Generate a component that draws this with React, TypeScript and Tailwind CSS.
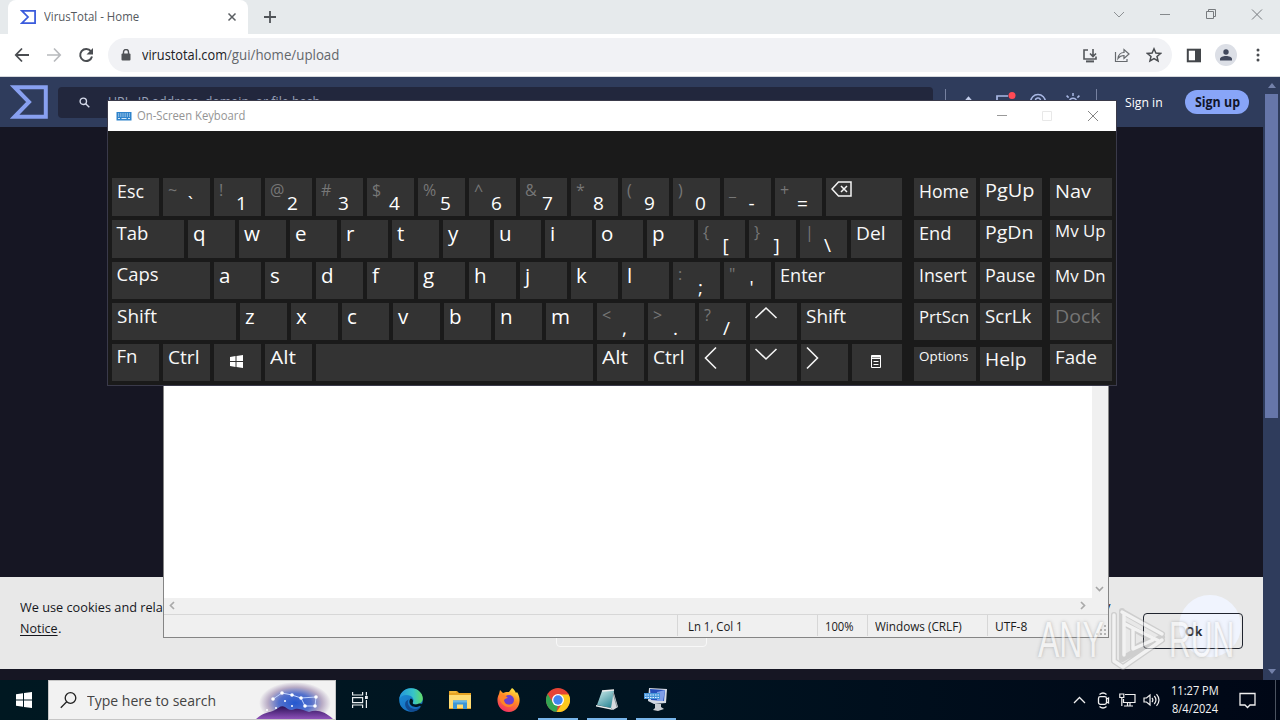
import { useLayoutEffect, useRef, useState } from "react";
import type { ReactNode } from "react";

/* Text squeezed or stretched horizontally so that it fills exactly w pixels. */
function Fit({ w, className = "", inner = "", children }: { w: number; className?: string; inner?: string; children: ReactNode }) {
  const ref = useRef<HTMLSpanElement>(null);
  const [scale, setScale] = useState(1);
  useLayoutEffect(() => {
    if (ref.current) setScale(w / ref.current.offsetWidth);
  }, [w]);
  return (
    <span className={`inline-block whitespace-nowrap ${className}`} style={{ width: w }}>
      <span ref={ref} className={`inline-block origin-left whitespace-nowrap ${inner}`} style={{ transform: `scaleX(${scale})` }}>
        {children}
      </span>
    </span>
  );
}

function Sigma({ className, color, sw }: { className: string; color: string; sw: number }) {
  return (
    <svg className={className} viewBox="0 0 38 34" fill="none" stroke={color} strokeWidth={sw} preserveAspectRatio="none">
      <path d="M4.5 2.2H35.8V31.8H4.5L19 17Z" />
    </svg>
  );
}

/* ---------- Browser ---------- */

function TabStrip() {
  return (
    <div className="flex h-[34px] shrink-0 bg-[#e6eaec]">
      <div className="ml-2 flex h-[34px] w-[240px] items-center rounded-t-lg bg-white pl-[12px]">
        <Sigma className="h-[14px] w-[16px]" color="#3a5bdc" sw={4.2} />
        <Fit w={95} className="ml-[8px] text-[12.5px] leading-4 text-[#55595e]">VirusTotal - Home</Fit>
        <svg className="ml-[88px] size-[10px]" viewBox="0 0 10 10" stroke="#5a5e62" strokeWidth="1.5">
          <path d="M1.5 1.5l7 7M8.5 1.5l-7 7" />
        </svg>
      </div>
      <svg className="ml-[15px] mt-[10px] size-[14px]" viewBox="0 0 14 14" stroke="#505458" strokeWidth="1.8">
        <path d="M7 1v12M1 7h12" />
      </svg>
      <div className="ml-auto flex h-[29px] items-center pr-[17px]">
        <svg className="h-3 w-[12px]" viewBox="0 0 12 12" fill="none" stroke="#8d9194">
          <path d="M1 3l5 5 5-5" />
        </svg>
        <svg className="ml-[34px] h-3 w-[12px]" viewBox="0 0 12 12" stroke="#85898c">
          <path d="M1 5.5h10" />
        </svg>
        <svg className="ml-[34px] h-3 w-[12px]" viewBox="0 0 12 12" fill="none" stroke="#777b7e">
          <path d="M1.5 2.5h7v7h-7zM3.5 2.500v-2h7v7h-2" />
        </svg>
        <svg className="ml-[34px] h-3 w-[12px]" viewBox="0 0 12 12" stroke="#777b7e">
          <path d="M1 .5l10 10M11 .5L1 10.500" />
        </svg>
      </div>
    </div>
  );
}

function Toolbar() {
  return (
    <div className="flex h-[43px] shrink-0 items-center border-b border-[#d5d8dc] bg-white">
      <svg className="ml-[14px] size-4" viewBox="0 0 16 16" fill="none" stroke="#4a4d51" strokeWidth="1.8">
        <path d="M15 8H2M8 1.5L1.8 8 8 14.5" />
      </svg>
      <svg className="ml-4 size-4" viewBox="0 0 16 16" fill="none" stroke="#b8babd" strokeWidth="1.7">
        <path d="M1 8h13M8 1.5L14.2 8 8 14.5" />
      </svg>
      <svg className="ml-4 size-4" viewBox="0 0 16 16" fill="none" stroke="#4a4d51" strokeWidth="2">
        <path d="M13 4.4A6 6 0 1 0 14 9.5" />
        <path d="M15 1v6.5H8.5z" fill="#4a4d51" stroke="none" />
      </svg>
      <div className="ml-[14px] flex h-[34px] w-[1064px] items-center rounded-full bg-[#f1f2f5]">
        <svg className="ml-[13px] h-[12px] w-[10px]" viewBox="0 0 10 12">
          <rect x="0.5" y="4.5" width="9" height="7" rx="1" fill="#505357" />
          <path d="M2.5 5V3a2.5 2.5 0 0 1 5 0v2" fill="none" stroke="#505357" strokeWidth="1.4" />
        </svg>
        <div className="ml-[11px] flex text-[14px] leading-5">
          <Fit w={85} className="text-[#202124]">virustotal.com</Fit>
          <Fit w={112} className="text-[#63676b]">/gui/home/upload</Fit>
        </div>
        <svg className="ml-auto h-[15px] w-[16px]" viewBox="0 0 16 15" fill="none" stroke="#55585c" strokeWidth="1.6">
          <path d="M6 2H2v9h12V8.5M11 1v7M8 5.5l3 3 3-3" />
          <path d="M4 13.4h8" strokeWidth="2" />
        </svg>
        <svg className="ml-4 size-[16px]" viewBox="0 0 16 16" fill="none" stroke="#66696d" strokeWidth="1.2">
          <path d="M1.500 5v9.500h11.500V12M4 11.500c.5-4 3-6 6-6V2.500L15 7l-5 4.500V8.500C7.500 8.500 5.500 9.500 4 11.500z" />
        </svg>
        <svg className="ml-4 mr-[10px] size-[16px]" viewBox="0 0 16 16" fill="none" stroke="#4a4d51" strokeWidth="1.5">
          <path d="M8 1.800l1.900 4.200 4.600.45-3.500 3 1.050 4.500L8 11.600l-4.050 2.350L5 9.450l-3.500-3L6.100 6z" />
        </svg>
      </div>
      <svg className="ml-[14px] size-[15px]" viewBox="0 0 15 15">
        <rect x="1.800" y="1.700" width="12.200" height="11.600" fill="none" stroke="#43464a" strokeWidth="2" />
        <rect x="9" y="1.500" width="5" height="12" fill="#43464a" />
      </svg>
      <div className="ml-[14px] flex size-[22px] items-center justify-center rounded-full bg-[#dcdfe6]">
        <svg className="size-3" viewBox="0 0 12 12" fill="#41485c">
          <circle cx="6" cy="3" r="2.700" />
          <path d="M0 11.500V10C0 8 3 7 6 7s6 1 6 3v1.500z" />
        </svg>
      </div>
      <svg className="ml-[19px] h-[14px] w-[4px]" viewBox="0 0 4 14" fill="#4a4d51">
        <circle cx="2" cy="2" r="1.500" />
        <circle cx="2" cy="7" r="1.500" />
        <circle cx="2" cy="12" r="1.500" />
      </svg>
    </div>
  );
}

function SiteHeader() {
  return (
    <div className="flex h-[50px] shrink-0 items-center bg-[#2f3c5c]">
      <Sigma className="ml-[10px] h-[34px] w-[38px]" color="#88a0f0" sw={4} />
      <div className="ml-[10px] flex h-[31px] w-[875px] items-center rounded bg-[#22273d]">
        <svg className="ml-[21px] mt-px size-[11px]" viewBox="0 0 11 11" fill="none" stroke="#d5daea" strokeWidth="1.400">
          <circle cx="4.300" cy="4.300" r="3.200" />
          <path d="M6.700 6.700L10.300 10.300" />
        </svg>
        <Fit w={212} className="ml-[18px] text-[14px] leading-5 text-[#98a0b8]">URL, IP address, domain, or file hash</Fit>
      </div>
      <div className="ml-[12px] h-[27px] w-px bg-[#7681a0]" />
      <svg className="ml-[15px] size-[15px]" viewBox="0 0 15 15" fill="none" stroke="#c5cfec" strokeWidth="1.600">
        <path d="M7.500 12V3M4 6.500L7.500 2.500 11 6.500M1.500 13.500h12" />
      </svg>
      <svg className="ml-[19px] h-[20px] w-[22px]" viewBox="0 0 22 20" fill="none">
        <path d="M13 4H2v13l3-3h12V8" stroke="#a9b8e4" strokeWidth="1.700" />
        <circle cx="17" cy="3.500" r="3.500" fill="#ff4a55" />
      </svg>
      <svg className="ml-[12px] size-[18px]" viewBox="0 0 18 18" fill="none" stroke="#a9b8e4" strokeWidth="1.500">
        <circle cx="9" cy="9" r="7.500" />
        <path d="M6.500 7.500a2.500 2.500 0 1 1 3.500 2.200c-1 .5-1 1-1 1.800M9 12.500V14" />
      </svg>
      <svg className="ml-[17px] size-[18px]" viewBox="0 0 18 18" fill="none" stroke="#a9b8e4" strokeWidth="1.500">
        <circle cx="9" cy="9" r="3.800" />
        <path d="M9 0v3M9 15v3M0 9h3M15 9h3M2.600 2.600l2 2M13.400 13.400l2 2M2.600 15.400l2-2M13.400 4.600l2-2" />
      </svg>
      <div className="ml-[14px] h-[27px] w-px bg-[#7681a0]" />
      <Fit w={38} className="ml-[28px] text-[13.500px] leading-5 text-white">Sign in</Fit>
      <div className="ml-[22px] flex h-6 w-16 items-center justify-center rounded-full bg-[#88a5f8]">
        <Fit w={45} className="text-[13.500px] font-bold leading-5 text-[#11162b]">Sign up</Fit>
      </div>
    </div>
  );
}

function CookieBanner() {
  return (
    <div className="relative mt-auto flex h-[92px] shrink-0 justify-between bg-[#e8e8e8]">
      <div className="pl-5 pt-[20px] text-[13.500px] leading-[21px] text-[#16171d]">
        <div><Fit w={147}>We use cookies and relat</Fit></div>
        <Fit w={38} inner="underline underline-offset-2">Notice</Fit>.
      </div>
      <div className="absolute left-[1179px] top-[18px] size-[62px] rounded-full bg-[#f0f4fe]" />
      <div className="absolute left-[556px] top-[40px] h-[30px] w-[151px] rounded border border-[#f8f8f8]" />
      <div className="relative mr-5 mt-9 flex h-9 w-[100px] items-center justify-center rounded border border-[#20242e]">
        <Fit w={17} className="text-[13px] font-bold leading-5 text-[#292b31]">Ok</Fit>
      </div>
      <div className="absolute left-[1104px] top-[20px] text-[13px] text-[#16171d]">y</div>
    </div>
  );
}

function Browser() {
  return (
    <div className="flex h-[680px] flex-col">
      <TabStrip />
      <Toolbar />
      <div className="flex flex-1">
        <div className="flex w-[1263px] flex-col bg-[#161623] pb-[11px]">
          <SiteHeader />
          <CookieBanner />
        </div>
        <div className="flex flex-1 flex-col items-center bg-[#2f3c5c]">
          <svg className="mt-[6px] h-[5px] w-2" viewBox="0 0 8 5" fill="#7381aa">
            <path d="M0 5L4 0l4 5z" />
          </svg>
          <div className="mt-[6px] h-[324px] w-[13px] bg-[#6676a9]" />
          <svg className="mb-[6px] mt-auto h-[5px] w-2" viewBox="0 0 8 5" fill="#7381aa">
            <path d="M0 0l4 5 4-5z" />
          </svg>
        </div>
      </div>
    </div>
  );
}

/* ---------- Text editor window ---------- */

function Notepad() {
  return (
    <div className="absolute left-[163px] top-[370px] flex h-[268px] w-[946px] flex-col border border-[#858585] bg-white">
      <div className="flex h-[227px]">
        <div className="flex-1" />
        <div className="flex w-[16px] items-end justify-center bg-[#f0f0f0] pb-[6px] pr-px">
          <svg className="h-[6px] w-[9px]" viewBox="0 0 9 6" fill="none" stroke="#a5a5a5" strokeWidth="1.600">
            <path d="M1 1l3.500 3.500L8 1" />
          </svg>
        </div>
      </div>
      <div className="flex h-[17px] items-start justify-between border-b border-[#d7d7d7] bg-[#f0f0f0] pl-[5px] pr-[22px] pt-[3px]">
        <svg className="h-[9px] w-[6px]" viewBox="0 0 6 9" fill="none" stroke="#aaaaaa" strokeWidth="1.700">
          <path d="M5 1L1.500 4.500 5 8" />
        </svg>
        <svg className="h-[9px] w-[6px]" viewBox="0 0 6 9" fill="none" stroke="#aaaaaa" strokeWidth="1.700">
          <path d="M1 1l3.500 3.500L1 8" />
        </svg>
      </div>
      <div className="flex flex-1 items-start bg-[#f0f0f0] text-[12px] leading-[23px] text-[#1a1a1a]">
        <div className="w-[513px]" />
        <div className="h-[21px] w-[140px] border-l border-[#d7d7d7] pl-[10px]"><Fit w={55}>Ln 1, Col 1</Fit></div>
        <div className="h-[21px] w-[50px] border-l border-[#d7d7d7] pl-[7px]"><Fit w={29}>100%</Fit></div>
        <div className="h-[21px] w-[120px] border-l border-[#d7d7d7] pl-[7px]"><Fit w={87}>Windows (CRLF)</Fit></div>
        <div className="h-[21px] flex-1 border-l border-[#d7d7d7] pl-[7px]"><Fit w={32}>UTF-8</Fit></div>
        <svg className="mr-[2px] mt-[10px] size-[10px]" viewBox="0 0 10 10" fill="#b5b5b5">
          <path d="M8 0h2v2H8zM8 4h2v2H8zM4 4h2v2H4zM8 8h2v2H8zM4 8h2v2H4zM0 8h2v2H0z" />
        </svg>
      </div>
    </div>
  );
}

/* ---------- On-screen keyboard ---------- */

function Label({ w, text, size = "text-[18.500px]", top = "pt-px leading-[24px]", dim = false }: { w: number; text: string; size?: string; top?: string; dim?: boolean }) {
  return (
    <div className={`pl-[4.500px] ${size} ${top} ${dim ? "text-[#757575]" : "text-[#f8f8f8]"}`}>
      <Fit w={w}>{text}</Fit>
    </div>
  );
}

function Key({ width = "w-[47px]", children }: { width?: string; children?: ReactNode }) {
  return <div className={`h-full shrink-0 bg-[#333333] ${width}`}>{children}</div>;
}

function Letter({ c }: { c: string }) {
  return (
    <Key>
      <div className="pl-[5px] pt-px text-[20.500px] leading-[25px] text-white">{c}</div>
    </Key>
  );
}

function Pair({ a, b }: { a: string; b: string }) {
  return (
    <Key>
      <div className="flex items-start">
        <div className="w-[17px] pl-[5px] pt-px text-[16px] leading-[22px] text-[#777777]">{a}</div>
        <div className="w-[21px] pt-[12px] text-center text-[19px] leading-[26px] text-white">{b}</div>
      </div>
    </Key>
  );
}

function Arrow({ d }: { d: string }) {
  return (
    <Key>
      <svg className="h-[26px] w-[30px]" viewBox="0 0 30 26" fill="none" stroke="#f5f5f5" strokeWidth="1.600">
        <path d={d} />
      </svg>
    </Key>
  );
}

const NUMBER_ROW: [string, string][] = [
  ["~", "`"], ["!", "1"], ["@", "2"], ["#", "3"], ["$", "4"], ["%", "5"], ["^", "6"],
  ["&", "7"], ["*", "8"], ["(", "9"], [")", "0"], ["_", "-"], ["+", "="],
];

function MainKeys() {
  return (
    <div className="flex w-[790px] flex-col">
      <div className="mb-1 flex h-[38px] gap-1">
        <Key><Label w={27} text="Esc" /></Key>
        {NUMBER_ROW.map(([a, b]) => <Pair key={b} a={a} b={b} />)}
        <Key width="w-[76px]">
          <svg className="ml-[5px] mt-[3px] h-[16px] w-[21px]" viewBox="0 0 21 16" fill="none" stroke="#f5f5f5" strokeWidth="1.500">
            <path d="M7.500 1H20v14H7.500L1 8zM10 5l6 6M16 5l-6 6" />
          </svg>
        </Key>
      </div>
      <div className="mb-1 flex h-[38px] gap-1">
        <Key width="w-[72px]"><Label w={32} text="Tab" /></Key>
        {[..."qwertyuiop"].map((c) => <Letter key={c} c={c} />)}
        <Pair a="{" b="[" />
        <Pair a="}" b="]" />
        <Pair a="|" b="\" />
        <Key width="w-[51px]"><Label w={29} text="Del" /></Key>
      </div>
      <div className="mb-1 flex h-[37px] gap-1">
        <Key width="w-[98px]"><Label w={42} text="Caps" top="pt-0 leading-[24px]" /></Key>
        {[..."asdfghjkl"].map((c) => <Letter key={c} c={c} />)}
        <Pair a=":" b=";" />
        <Pair a={'"'} b="'" />
        <Key width="w-[127px]"><Label w={45} text="Enter" /></Key>
      </div>
      <div className="mb-1 flex h-[37px] gap-1">
        <Key width="w-[124px]"><Label w={40} text="Shift" /></Key>
        {[..."zxcvbnm"].map((c) => <Letter key={c} c={c} />)}
        <Pair a="<" b="," />
        <Pair a=">" b="." />
        <Pair a="?" b="/" />
        <Arrow d="M5.500 15L16 5L26.500 15" />
        <Key width="w-[101px]"><Label w={40} text="Shift" /></Key>
      </div>
      <div className="flex h-[37px] gap-1">
        <Key><Label w={21} text="Fn" top="pt-0 leading-[24px]" /></Key>
        <Key><Label w={31} text="Ctrl" /></Key>
        <Key>
          <svg className="ml-4 mt-[11px] size-[13px]" viewBox="0 0 13 13" fill="white">
            <path d="M0 1.900L5.500 1.100V6H0zM6.500 1L13 0v6H6.500zM0 7h5.500v4.900L0 11.100zM6.500 7H13v6l-6.500-1z" />
          </svg>
        </Key>
        <Key><Label w={26} text="Alt" /></Key>
        <Key width="w-[277px]" />
        <Key><Label w={26} text="Alt" /></Key>
        <Key><Label w={31} text="Ctrl" /></Key>
        <Arrow d="M17 3.500L6.500 14L17 24.500" />
        <Arrow d="M5.500 5L16 15L26.500 5" />
        <Arrow d="M6 3.500L16.500 14L6 24.500" />
        <Key width="w-[50px]">
          <svg className="ml-[19px] mt-[11px] h-[13px] w-[10px]" viewBox="0 0 10 13" fill="none" stroke="#ffffff">
            <path d="M.5 .5h9v12h-9zM.5 3.500h9M2.500 6.500h5M2.500 9.500h5" />
            <path d="M.5 1.500h9" strokeWidth="2" />
          </svg>
        </Key>
      </div>
    </div>
  );
}

function SideKeys() {
  const k = "w-[62px]";
  return (
    <>
      <div className="ml-[12px] flex flex-col">
        <div className="mb-1 h-[38px]"><Key width={k}><Label w={49.5} text="Home" /></Key></div>
        <div className="mb-1 h-[38px]"><Key width={k}><Label w={32.5} text="End" /></Key></div>
        <div className="mb-1 h-[37px]"><Key width={k}><Label w={48} text="Insert" /></Key></div>
        <div className="mb-[7px] h-[37px]"><Key width={k}><Label w={50} text="PrtScn" size="text-[17px]" top="pt-px leading-[26px]" /></Key></div>
        <div className="h-[34px]"><Key width={k}><Label w={49.5} text="Options" size="text-[13px]" top="pt-0 leading-[18px]" /></Key></div>
      </div>
      <div className="ml-1 flex flex-col">
        <div className="mb-1 h-[38px]"><Key width={k}><Label w={49.5} text="PgUp" top="pt-0 leading-[24px]" /></Key></div>
        <div className="mb-1 h-[38px]"><Key width={k}><Label w={48.5} text="PgDn" top="pt-0 leading-[24px]" /></Key></div>
        <div className="mb-1 h-[37px]"><Key width={k}><Label w={50.5} text="Pause" /></Key></div>
        <div className="mb-[7px] h-[37px]"><Key width={k}><Label w={46.5} text="ScrLk" /></Key></div>
        <div className="h-[34px]"><Key width={k}><Label w={41.5} text="Help" top="pt-0 leading-[24px]" /></Key></div>
      </div>
      <div className="ml-2 flex flex-col">
        <div className="mb-1 h-[38px]"><Key width={k}><Label w={35.5} text="Nav" /></Key></div>
        <div className="mb-1 h-[38px]"><Key width={k}><Label w={50.5} text="Mv Up" size="text-[16px]" top="pt-0 leading-[22px]" /></Key></div>
        <div className="mb-1 h-[37px]"><Key width={k}><Label w={50.5} text="Mv Dn" size="text-[16px]" top="pt-[2px] leading-[24px]" /></Key></div>
        <div className="mb-1 h-[37px]"><Key width={k}><Label w={45.5} text="Dock" dim /></Key></div>
        <div className="h-[37px]"><Key width={k}><Label w={42.5} text="Fade" /></Key></div>
      </div>
    </>
  );
}

function OnScreenKeyboard() {
  return (
    <div className="absolute left-[107px] top-[100px] h-[286px] w-[1010px] border border-[#3a3a4a] bg-[#1a1a1a]">
      <div className="flex h-[30px] items-center bg-white">
        <svg className="ml-[8px] h-[9px] w-[16px]" viewBox="0 0 16 9">
          <rect x=".5" width="15" height="8.500" fill="#2f83cb" />
          <path d="M2 2h12M2 4h12" stroke="#d5e8f8" strokeDasharray="1.200 1" />
          <path d="M2 6.500h2M5.500 6.500h5M12 6.500h2" stroke="#d5e8f8" />
        </svg>
        <Fit w={108} className="ml-[5px] text-[12px] leading-4 text-[#949494]">On-Screen Keyboard</Fit>
        <svg className="ml-auto size-[12px]" viewBox="0 0 12 12" stroke="#999999"><path d="M1 5.500h10" /></svg>
        <svg className="ml-[33px] size-[12px]" viewBox="0 0 12 12" fill="none" stroke="#e8e8e8"><path d="M1.500 1.500h9v9h-9z" /></svg>
        <svg className="ml-[34px] mr-[17px] size-[12px]" viewBox="0 0 12 12" stroke="#858585"><path d="M1 1l10 10M11 1L1 11" /></svg>
      </div>
      <div className="flex pl-1 pt-[47px]">
        <MainKeys />
        <SideKeys />
      </div>
    </div>
  );
}

/* ---------- Watermark ---------- */

function Watermark() {
  return (
    <div className="absolute left-[1038px] top-[606px] flex h-[68px] w-[200px] items-center opacity-60">
      <div className="font-['Liberation_Sans'] text-[50px] leading-[60px] text-[#fafafa] [text-shadow:0_0_4px_#888]"><Fit w={66}>ANY</Fit></div>
      <svg className="ml-[2px] h-[66px] w-[60px]" viewBox="0 0 60 66" fill="none" strokeLinejoin="round" strokeLinecap="round">
        <g stroke="#a0a0a0" strokeWidth="6" opacity="0.600">
          <path d="M8 8v46l9 6L56 33M16 4v48L56 30M17 5L56 27M27 22v20l19-10M17 16l34 19" />
        </g>
        <g stroke="#fafafa" strokeWidth="3.400">
          <path d="M8 8v46l9 6L56 33M16 5L56 27M18 6v42M27 22v20l20-9M19 17l34 17" />
        </g>
      </svg>
      <div className="ml-[3px] font-['Liberation_Sans'] text-[50px] leading-[60px] text-[#fafafa] [text-shadow:0_0_4px_#999]"><Fit w={65}>RUN</Fit></div>
    </div>
  );
}

/* ---------- Taskbar ---------- */

function SearchArt() {
  return (
    <svg className="ml-auto h-[38px] w-[79px]" viewBox="0 0 79 38">
      <defs>
        <radialGradient id="sky">
          <stop offset="0" stopColor="#2458cf" />
          <stop offset="0.450" stopColor="#5270cc" />
          <stop offset="0.750" stopColor="#b8abc5" />
          <stop offset="1" stopColor="#f2f2f2" />
        </radialGradient>
        <linearGradient id="hill" x2="0" y2="1">
          <stop stopColor="#2d1258" />
          <stop offset="1" stopColor="#8e52ba" />
        </linearGradient>
      </defs>
      <ellipse cx="39" cy="22" rx="36" ry="21" fill="url(#sky)" />
      <path d="M0 38C8 31 13 32 19 29c4-2 6-5 10-3 4 3 6 4 10 2 6-1 9 2 14 3 7-3 16-1 24 7z" fill="url(#hill)" />
      <path d="M17 18l9-6 10 2 9 3 15-1-1 9H49l-4-8" fill="none" stroke="#bfd4ff" strokeWidth="1" />
      <g fill="white">
        <circle cx="17" cy="18" r="1.800" /><circle cx="26" cy="12" r="1.800" /><circle cx="36" cy="14" r="1.800" />
        <circle cx="45" cy="17" r="1.800" /><circle cx="60" cy="16" r="1.800" /><circle cx="59" cy="25" r="1.800" />
        <circle cx="49" cy="25" r="1.800" /><circle cx="29" cy="20" r="1" /><circle cx="36" cy="25" r="1" />
        <circle cx="20" cy="27" r="1" /><circle cx="11" cy="29" r="1" />
      </g>
    </svg>
  );
}

function TaskSlot({ active = false, children }: { active?: boolean; children: ReactNode }) {
  return (
    <div className="flex w-[49px] flex-col items-center justify-between">
      <div className="flex h-[38px] items-center pt-[2px]">{children}</div>
      <div className={`h-[2px] w-[40px] ${active ? "bg-[#78b5ea]" : ""}`} />
    </div>
  );
}

function Taskbar() {
  return (
    <div className="flex h-10 bg-gradient-to-r from-[#001821] via-[#001421] to-[#000716]">
      <div className="flex w-12 items-center justify-center">
        <svg className="size-4" viewBox="0 0 16 16" fill="white">
          <path d="M0 2.200L7 1.200V7.500H0zM8 1L16 0v7.500H8zM0 8.500h7v6.300L0 13.800zM8 8.500h8V16l-8-1z" />
        </svg>
      </div>
      <div className="flex w-[288px] items-center border border-[#c6c6c6] bg-[#f2f2f2]">
        <svg className="ml-[11px] size-[18px]" viewBox="0 0 18 18" fill="none" stroke="#222222" strokeWidth="1.300">
          <circle cx="10.500" cy="7" r="5.300" />
          <path d="M6.700 10.800L.8 16.700" />
        </svg>
        <Fit w={129} className="ml-[9px] text-[15px] leading-5 text-[#444444]">Type here to search</Fit>
        <SearchArt />
      </div>
      <div className="flex w-[50px] items-center pl-4">
        <svg className="size-4" viewBox="0 0 16 16" fill="none" stroke="#e8edf0" strokeWidth="1.200">
          <path d="M.6 0v3h10V0M.6 5.600h10v5H.6zM.6 16v-3h10v3M14.400 0v3.500M14.400 8v8" />
          <path d="M13 4h2.800v3H13z" fill="#e8edf0" stroke="none" />
        </svg>
      </div>
      <TaskSlot>
        <svg className="size-6" viewBox="0 0 24 24">
          <defs>
            <linearGradient id="edgeTop" x1="0" x2="1"><stop stopColor="#2394dc" /><stop offset="0.600" stopColor="#37c4c8" /><stop offset="1" stopColor="#62dc65" /></linearGradient>
            <linearGradient id="edgeLow" x2="0.700" y2="1"><stop stopColor="#1b91d8" /><stop offset="1" stopColor="#1569bb" /></linearGradient>
          </defs>
          <circle cx="12" cy="12" r="11.800" fill="url(#edgeLow)" />
          <path d="M.3 11C1.200 4.500 6 .2 12 .2c7 0 11.800 5 11.800 10 0 4-3.400 6.300-6.700 6.300-2.500 0-3.900-1-3.400-1.700 1.600-1.700 1-5-2-6.700C7.800 6 2.500 6.500.3 11z" fill="url(#edgeTop)" />
          <path d="M9.800 11.500c-2.500 3 0 9 5.200 9.500 2.500.2 5-.7 6.700-2-3.500 6-12.200 6.300-15 0-1.500-3.800 0-6.700 3.100-7.500z" fill="#114b91" />
          <path d="M11.800 10.600c-2 1.800-1.700 5.200.5 7 2.800 2.200 6.500 1.600 8.700.1l1 1.200 2-3-4-.5c-3 1.600-6.700 1.200-6.300-.6.700-1.300.5-3.700-1.900-4.200z" fill="#001721" />
        </svg>
      </TaskSlot>
      <TaskSlot>
        <svg className="h-[20px] w-[22px]" viewBox="0 0 22 20">
          <path d="M0 1h8l2 2h12v16H0z" fill="#e6a323" />
          <path d="M0 5h22v13H0z" fill="#ffdc73" />
          <path d="M4 19v-8.500h14V19h-4v-4.500H8V19z" fill="#3c96d5" />
          <path d="M4 10.500h14v2H4z" fill="#67b7e6" />
          <path d="M1 2h6" stroke="#ffce50" />
        </svg>
      </TaskSlot>
      <TaskSlot>
        <svg className="size-6" viewBox="0 0 24 24">
          <defs><linearGradient id="fox" x1="0.800" y1="0" x2="0.300" y2="1"><stop stopColor="#fff044" /><stop offset="0.450" stopColor="#ff8b25" /><stop offset="1" stopColor="#f32c65" /></linearGradient></defs>
          <path d="M2 6l1-4 3 3 3-1 3 0 3-4c2 1 3 3 4 5l1-1c6 9 1 20-8 20C2 24-2 13 2 6z" fill="url(#fox)" />
          <circle cx="12" cy="12" r="5" fill="#6b3fd0" />
          <path d="M2 7c3-1.500 6 0 9 3-2 0-3 1-4 2 0 5 6 6 10 3-1 7-15 5-15-8z" fill="#ff8427" />
        </svg>
      </TaskSlot>
      <TaskSlot active>
        <svg className="size-6" viewBox="0 0 24 24">
          <circle cx="12" cy="12" r="12" fill="#e54335" />
          <path d="M1.600 6L7.500 15.500 12 17l-1.500 7A12 12 0 0 1 1.600 6z" fill="#34a553" />
          <path d="M12 6.500h10.600A12 12 0 0 1 10.500 24L16.500 15z" fill="#fcc91e" />
          <circle cx="12" cy="12" r="6" fill="white" />
          <circle cx="12" cy="12" r="4.700" fill="#4185ef" />
        </svg>
      </TaskSlot>
      <TaskSlot active>
        <svg className="size-6" viewBox="0 0 24 24">
          <defs><linearGradient id="pad" x2="0.600" y2="1"><stop stopColor="#d3eeee" /><stop offset="1" stopColor="#388f9c" /></linearGradient></defs>
          <path d="M18 2l5 17-5 3-3-3z" fill="#d8dce0" />
          <path d="M7 3l12-1-3 18-14-3z" fill="url(#pad)" />
          <path d="M1 17l15 3 2 2L1 18.500z" fill="#e8eeee" />
          <path d="M7 3l12-1" stroke="#eeeeee" strokeWidth="1.500" />
          <path d="M18 5l4 14" stroke="#879398" />
        </svg>
      </TaskSlot>
      <TaskSlot active>
        <svg className="size-6" viewBox="0 0 24 24">
          <path d="M5 0l18 1-1 14-12 1L4 13z" fill="#d4d9e3" />
          <path d="M6 1l15 1-1 11-13-1z" fill="#2750bb" />
          <path d="M13 4l8-2-2 11h-6z" fill="#7e9de8" />
          <path d="M11 16h6v3l3 2-6 2-5-1 2-2z" fill="#c9cdd2" />
          <path d="M0 5h16v6H0z" fill="#4796db" />
          <path d="M1 7h14M1 9.500h14" stroke="#e0efff" strokeDasharray="1.500 1" />
        </svg>
      </TaskSlot>
      <div className="ml-auto flex items-center">
        <svg className="h-[8px] w-[13px]" viewBox="0 0 13 8" fill="none" stroke="#f0f0f0" strokeWidth="1.300"><path d="M1 7l5.500-5.500L12 7" /></svg>
        <svg className="ml-[11px] h-[17px] w-[13px]" viewBox="0 0 13 17" fill="none" stroke="#f0f0f0" strokeWidth="1.300">
          <path d="M2.500 2.500q3.500-3 7 0M2.500 14.500q3.500 3 7 0M9.500 7l2-1v5l-2-1" />
          <rect x="1.500" y="4.700" width="8" height="7.600" rx="1.800" />
        </svg>
        <svg className="ml-[9px] h-[14px] w-[17px]" viewBox="0 0 17 14" fill="none" stroke="#f0f0f0" strokeWidth="1.200">
          <path d="M6 1.500h10v8H4.500V6M5 13h9M8.500 9.500V13M11 9.500V13M.8 1h4v3.500h-4zM2.800 4.500V13" />
        </svg>
        <svg className="ml-[7px] h-[14px] w-[17px]" viewBox="0 0 17 14" fill="none" stroke="#f0f0f0" strokeWidth="1.200">
          <path d="M1 5v4h2.500L7 12V2L3.500 5zM9 5q1.700 2 0 4M11.300 3q3.300 4 0 8M13.500 1.200q5 5.800 0 11.600" />
        </svg>
        <div className="ml-[10px] flex w-[50px] flex-col items-center text-[12px] leading-[18px] text-[#f4f4f4]">
          <Fit w={48}>11:27 PM</Fit>
          <Fit w={46}>8/4/2024</Fit>
        </div>
        <svg className="ml-[19px] h-[17px] w-[17px]" viewBox="0 0 17 17" fill="none" stroke="#f0f0f0" strokeWidth="1.300">
          <path d="M1 1.500h15v11.500h-5L8.500 15.500 6 13H1z" />
        </svg>
        <div className="ml-[19px] mr-1 h-10 w-px bg-[#4b5360]" />
      </div>
    </div>
  );
}

export default function App() {
  return (
    <div className="relative h-[720px] w-[1280px] overflow-hidden bg-[#161623] font-['Open_Sans','Noto_Sans',sans-serif]">
      <Browser />
      <Taskbar />
      <Notepad />
      <OnScreenKeyboard />
      <Watermark />
    </div>
  );
}
